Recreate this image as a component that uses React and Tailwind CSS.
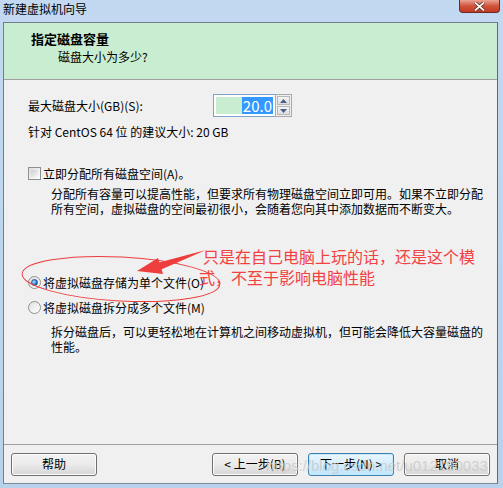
import React from 'react'

const font = "font-['Noto_Sans_CJK_SC',sans-serif]"

function WinButton({ children, focused }) {
  return (
    <div
      className={`w-[86px] h-[23px] rounded-[3px] border flex items-center justify-center text-[12px] text-black ${
        focused
          ? 'border-[#3c7fb1] bg-gradient-to-b from-[#eaf6fd] to-[#bee6fd] shadow-[inset_0_0_0_1px_#c5e9fb]'
          : 'border-[#707070] bg-gradient-to-b from-[#f2f2f2] via-[#ebebeb] to-[#d5d5d5] shadow-[inset_0_0_0_1px_#fcfcfc]'
      }`}
    >
      {children}
    </div>
  )
}

function Radio({ checked }) {
  return (
    <div className="w-[13px] h-[13px] rounded-full border border-[#8e8f8f] bg-gradient-to-br from-[#e0e0e0] to-[#ffffff] flex items-center justify-center shrink-0">
      {checked && <div className="w-[7px] h-[7px] rounded-full bg-[radial-gradient(circle_at_35%_35%,#a9e3ff,#1b6cbf_70%)] border border-[#1d4f8c]" />}
    </div>
  )
}

export default function App() {
  return (
    <div className={`relative w-[503px] h-[488px] bg-gradient-to-b from-[#c2d9f1] to-[#b9d1ea] flex flex-col overflow-hidden ${font}`}>
      {/* title bar */}
      <div className="h-[22px] flex items-start justify-between shrink-0">
        <span className="text-[12px] leading-[16px] text-black pl-[3px] pt-[1px]">新建虚拟机向导</span>
        <div className="mr-[3px] w-[41px] h-[13px] rounded-b-[4px] border border-t-0 border-[#6a2a22] bg-gradient-to-b from-[#e8a493] via-[#d2523a] to-[#c23a25] flex items-center justify-center">
          <svg width="11" height="9" viewBox="0 0 11 9">
            <path d="M1 0.5 L10 8.5 M10 0.5 L1 8.5" stroke="#4a1f18" strokeWidth="3.2" />
            <path d="M1 0.5 L10 8.5 M10 0.5 L1 8.5" stroke="#ffffff" strokeWidth="1.8" />
          </svg>
        </div>
      </div>

      {/* client area */}
      <div className="ml-[3px] mr-[5px] mb-[4px] flex-1 flex flex-col bg-[#f0f0f0] border-t border-l border-[#6f7f8f] border-r border-b border-r-[#5d6b79] border-b-[#7a8a9a]">
        {/* header */}
        <div className="h-[57px] bg-[#c9edd0] border-b border-[#a0a0a0] pl-[27px] pt-[8px] shrink-0">
          <div className="text-[13px] leading-[16px] font-bold text-black">指定磁盘容量</div>
          <div className="text-[12px] leading-[16px] text-black pl-[27px] pt-[2px]">磁盘大小为多少?</div>
        </div>

        {/* body */}
        <div className="flex-1 flex flex-col pl-[24px] text-[12px] text-black">
          <div className="flex items-center h-[23px] mt-[14px]">
            <span className="w-[185px] leading-[15px]">最大磁盘大小(GB)(S):</span>
            <div className="flex h-[23px]">
              <div className="w-[62px] h-[23px] border border-[#7da2ce] border-r-0 bg-white p-[2px] flex">
                <div className="flex-1 bg-[#c9edd0]" />
                <div className="bg-[#3399ff] text-white text-[15px] leading-[16px] px-[1px] flex items-center">20.0</div>
              </div>
              <div className="w-[17px] flex flex-col border border-[#a9a9a9] bg-[#f0f0f0] p-[1px] gap-[1px]">
                <div className="flex-1 border border-[#b7b7b7] bg-gradient-to-b from-[#f5f5f5] to-[#dedede] flex items-center justify-center">
                  <svg width="7" height="4" viewBox="0 0 7 4"><path d="M0 4 L3.5 0 L7 4 Z" fill="#4d5c8c" /></svg>
                </div>
                <div className="flex-1 border border-[#b7b7b7] bg-gradient-to-b from-[#f5f5f5] to-[#dedede] flex items-center justify-center">
                  <svg width="7" height="4" viewBox="0 0 7 4"><path d="M0 0 L3.5 4 L7 0 Z" fill="#4d5c8c" /></svg>
                </div>
              </div>
            </div>
          </div>
          <div className="mt-[7px] leading-[15px]">针对 CentOS 64 位 的建议大小: 20 GB</div>

          <div className="flex items-center gap-[2px] mt-[27px] h-[15px]">
            <div className="w-[13px] h-[13px] border border-[#8e8f8f] bg-gradient-to-br from-[#dcdcdc] to-[#ffffff] p-[2px] shrink-0">
              <div className="w-full h-full bg-gradient-to-br from-[#cbcfd5] to-[#f6f6f6]" />
            </div>
            <span className="leading-[15px]">立即分配所有磁盘空间(A)。</span>
          </div>
          <div className="pl-[23px] mt-[5px] leading-[15px] w-[470px]">
            <div>分配所有容量可以提高性能，但要求所有物理磁盘空间立即可用。如果不立即分配</div>
            <div>所有空间，虚拟磁盘的空间最初很小，会随着您向其中添加数据而不断变大。</div>
          </div>

          <div className="flex items-center gap-[2px] mt-[59px] h-[15px]">
            <Radio checked />
            <span className="leading-[15px]">将虚拟磁盘存储为单个文件(O)</span>
          </div>
          <div className="flex items-center gap-[2px] mt-[10px] h-[15px]">
            <Radio />
            <span className="leading-[15px]">将虚拟磁盘拆分成多个文件(M)</span>
          </div>
          <div className="pl-[23px] mt-[9px] leading-[15px] w-[470px]">
            <div>拆分磁盘后，可以更轻松地在计算机之间移动虚拟机，但可能会降低大容量磁盘的</div>
            <div>性能。</div>
          </div>
        </div>

        {/* footer */}
        <div className="h-[39px] border-t border-[#a0a0a0] flex items-center px-[7px] shrink-0">
          <WinButton>帮助</WinButton>
          <div className="flex-1" />
          <div className="flex gap-[10px]">
            <WinButton>&lt; 上一步(B)</WinButton>
            <WinButton focused>下一步(N) &gt;</WinButton>
            <WinButton>取消</WinButton>
          </div>
        </div>
      </div>

      {/* annotation overlay */}
      <svg className="absolute left-0 top-0 pointer-events-none" width="503" height="488">
        <ellipse cx="121" cy="279" rx="99" ry="22" transform="rotate(3 121 279)" fill="none" stroke="#ee3d3d" strokeWidth="1" />
        <path d="M206 250 L157 263 L160 270 Z" fill="#ee3d3d" />
        <path d="M137 271 L158 258 L163 274 Z" fill="#ee3d3d" />
      </svg>
      <div className="absolute left-[203px] top-[246px] text-[16px] leading-[21px] text-[#f24141] w-[295px] pointer-events-none">
        <div className="whitespace-nowrap">只是在自己电脑上玩的话，还是这个模</div>
        <div className="whitespace-nowrap -ml-[4px]">式，不至于影响电脑性能</div>
      </div>
      <div className="absolute left-[266px] top-[457px] text-[15px] leading-[18px] text-[#c8c8c8]/80 font-['Liberation_Sans',sans-serif] pointer-events-none">
        https://blog.csdn.net/u012190033
      </div>
    </div>
  )
}
